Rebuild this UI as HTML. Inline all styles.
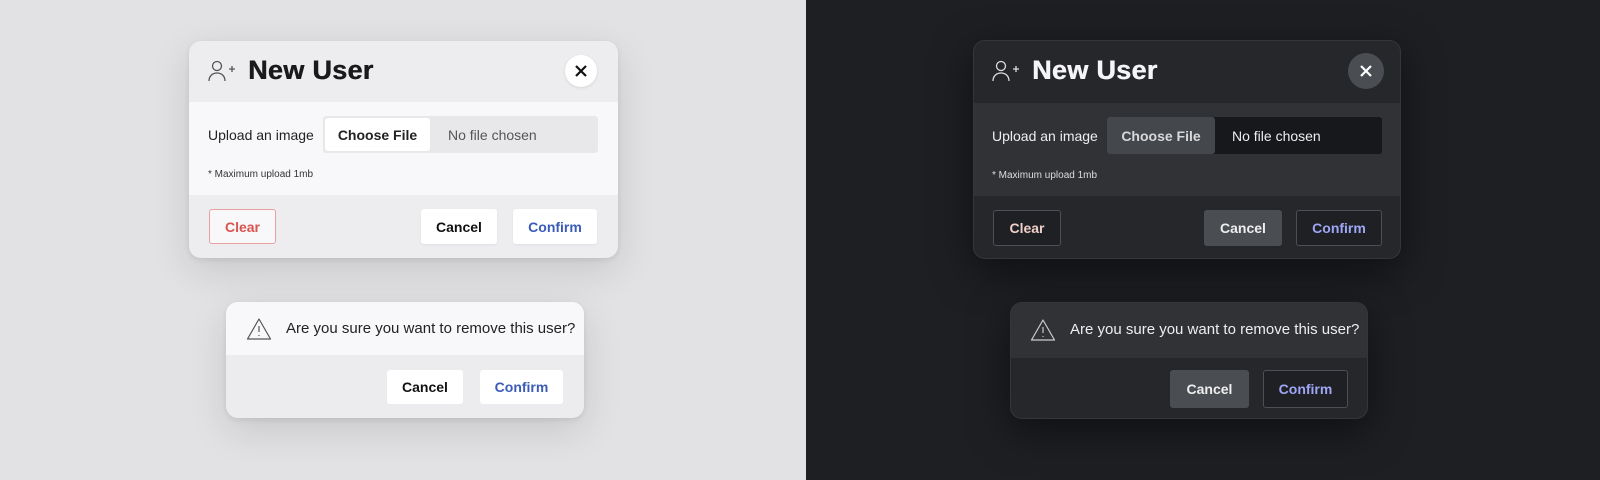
<!DOCTYPE html>
<html><head><meta charset="utf-8"><style>
*{margin:0;padding:0;box-sizing:border-box}
body{width:1600px;height:480px;position:relative;overflow:hidden;font-family:"Liberation Sans",Arial,sans-serif;background:#e2e2e4}
div,span{position:absolute}
.t{white-space:nowrap}
.btn{display:flex;align-items:center;justify-content:center;font-weight:700;font-size:14px;border-radius:3px}
.ttl{font-size:27px;font-weight:900;letter-spacing:0.3px}
</style></head><body>
<div style="left:806px;top:0;width:794px;height:480px;background:#1e1f23"></div>

<!-- light dialog -->
<div style="left:189px;top:41px;width:429px;height:217px;border-radius:12px;overflow:hidden;background:#ededef;box-shadow:0 12px 40px rgba(0,0,0,.12),0 2px 6px rgba(0,0,0,.08)">
  <div style="left:0;top:61px;width:429px;height:93px;background:#f8f8fa"></div>
</div>
<svg style="position:absolute;left:207px;top:59px" width="30" height="24" viewBox="0 0 30 24" fill="none" stroke="#555" stroke-width="1.3"><circle cx="10" cy="7" r="4.5"/><path d="M2 22c0-5 3.5-8 8-8s8 3 8 8"/><path d="M22 10h6M25 7v6"/></svg>
<span class="t ttl" style="left:248px;top:55px;color:#1a1a1c;text-shadow:0.5px 0 0 #1a1a1c">New User</span>
<div style="left:565px;top:55px;width:32px;height:32px;border-radius:50%;background:#fff;box-shadow:0 1px 3px rgba(0,0,0,.1)"></div>
<svg style="position:absolute;left:575px;top:65px" width="12" height="12" viewBox="0 0 12 12" stroke="#111" stroke-width="2.2"><path d="M1 1l10 10M11 1L1 11"/></svg>
<span class="t" style="left:208px;top:127px;font-size:14px;color:#222">Upload an image</span>
<div style="left:323px;top:116px;width:275px;height:37px;background:#e8e8ea;border-radius:3px"></div>
<div class="btn" style="left:325px;top:118px;width:105px;height:33px;background:#fff;color:#222">Choose File</div>
<span class="t" style="left:448px;top:127px;font-size:14px;color:#555">No file chosen</span>
<span class="t" style="left:208px;top:169px;font-size:10px;color:#333">* Maximum upload 1mb</span>
<div class="btn" style="left:209px;top:209px;width:67px;height:35px;border:1.5px solid #eaa0a0;color:#d9534f;background:#f8f8fa">Clear</div>
<div class="btn" style="left:421px;top:209px;width:76px;height:35px;background:#fff;color:#111;box-shadow:0 1px 2px rgba(0,0,0,.06)">Cancel</div>
<div class="btn" style="left:513px;top:209px;width:84px;height:35px;background:#fff;color:#3a5bb8;box-shadow:0 1px 2px rgba(0,0,0,.06)">Confirm</div>

<!-- light confirm -->
<div style="left:226px;top:302px;width:358px;height:116px;border-radius:12px;overflow:hidden;background:#ececee;box-shadow:0 12px 40px rgba(0,0,0,.12),0 2px 6px rgba(0,0,0,.08)">
  <div style="left:0;top:0;width:358px;height:53px;background:#f8f8fa"></div>
</div>
<svg style="position:absolute;left:246px;top:317px" width="26" height="24" viewBox="0 0 26 24" fill="none" stroke="#555" stroke-width="1.2"><path d="M13 2L1.5 22h23z" stroke-linejoin="round"/><path d="M13 9v6M13 18v1"/></svg>
<span class="t" style="left:286px;top:320px;font-size:15px;color:#222">Are you sure you want to remove this user?</span>
<div class="btn" style="left:387px;top:370px;width:76px;height:34px;background:#fff;color:#111">Cancel</div>
<div class="btn" style="left:480px;top:370px;width:83px;height:34px;background:#fff;color:#3a5bb8">Confirm</div>

<!-- dark dialog -->
<div style="left:973px;top:40px;width:428px;height:219px;border-radius:12px;overflow:hidden;background:#25272b;box-shadow:0 12px 40px rgba(0,0,0,.5);border:1px solid #34363a">
  <div style="left:0;top:62px;width:428px;height:93px;background:#303236"></div>
</div>
<svg style="position:absolute;left:991px;top:59px" width="30" height="24" viewBox="0 0 30 24" fill="none" stroke="#ddd" stroke-width="1.3"><circle cx="10" cy="7" r="4.5"/><path d="M2 22c0-5 3.5-8 8-8s8 3 8 8"/><path d="M22 10h6M25 7v6"/></svg>
<span class="t ttl" style="left:1032px;top:55px;color:#f5f5f7;text-shadow:0.5px 0 0 #f5f5f7">New User</span>
<div style="left:1348px;top:53px;width:36px;height:36px;border-radius:50%;background:#4a4d52"></div>
<svg style="position:absolute;left:1360px;top:65px" width="12" height="12" viewBox="0 0 12 12" stroke="#fff" stroke-width="2.2"><path d="M1 1l10 10M11 1L1 11"/></svg>
<span class="t" style="left:992px;top:128px;font-size:14px;color:#eee">Upload an image</span>
<div style="left:1107px;top:117px;width:275px;height:37px;background:#17181b;border-radius:3px"></div>
<div class="btn" style="left:1107px;top:117px;width:108px;height:37px;background:#44474c;color:#d8d8da">Choose File</div>
<span class="t" style="left:1232px;top:128px;font-size:14px;color:#eee">No file chosen</span>
<span class="t" style="left:992px;top:170px;font-size:10px;color:#ddd">* Maximum upload 1mb</span>
<div class="btn" style="left:993px;top:210px;width:68px;height:36px;border:1.5px solid #4c4f55;color:#f0cfc8;background:#1f2024">Clear</div>
<div class="btn" style="left:1204px;top:210px;width:78px;height:36px;background:#4a4d52;color:#eee">Cancel</div>
<div class="btn" style="left:1296px;top:210px;width:86px;height:36px;border:1.5px solid #4c4f55;color:#9ea6f5;background:#1f2024">Confirm</div>

<!-- dark confirm -->
<div style="left:1010px;top:302px;width:358px;height:117px;border-radius:12px;overflow:hidden;background:#25272b;box-shadow:0 12px 40px rgba(0,0,0,.5);border:1px solid #34363a">
  <div style="left:0;top:0;width:358px;height:55px;background:#303236"></div>
</div>
<svg style="position:absolute;left:1030px;top:318px" width="26" height="24" viewBox="0 0 26 24" fill="none" stroke="#ccc" stroke-width="1.2"><path d="M13 2L1.5 22h23z" stroke-linejoin="round"/><path d="M13 9v6M13 18v1"/></svg>
<span class="t" style="left:1070px;top:321px;font-size:15px;color:#eee">Are you sure you want to remove this user?</span>
<div class="btn" style="left:1170px;top:370px;width:79px;height:38px;background:#4a4d52;color:#eee">Cancel</div>
<div class="btn" style="left:1263px;top:370px;width:85px;height:38px;border:1.5px solid #4c4f55;color:#9ea6f5;background:#1f2024">Confirm</div>
</body></html>
